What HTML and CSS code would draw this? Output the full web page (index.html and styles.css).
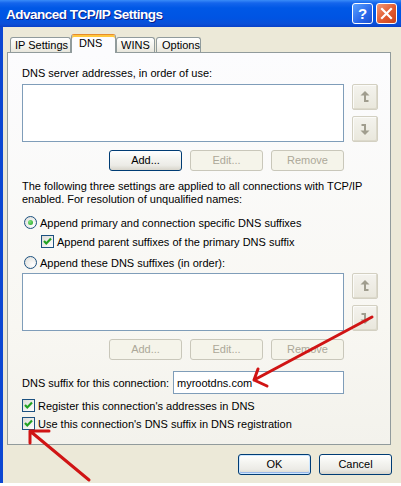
FILE: index.html
```html
<!DOCTYPE html>
<html>
<head>
<meta charset="utf-8">
<title>Advanced TCP/IP Settings</title>
<link rel="stylesheet" href="styles.css">
</head>
<body>
<div class="window">
  <div class="titlebar">
    <span class="title">Advanced TCP/IP Settings</span>
    <div class="caption-btns">
      <span class="cap-btn help">?</span>
      <span class="cap-btn close"><svg width="13" height="13" viewBox="0 0 13 13"><path d="M2 2 L11 11 M11 2 L2 11" stroke="#fff" stroke-width="2.2" stroke-linecap="square"/></svg></span>
    </div>
  </div>
  <div class="client">
    <div class="tabs">
      <span class="tab t-ip">IP Settings</span>
      <span class="tab t-dns active">DNS</span>
      <span class="tab t-wins">WINS</span>
      <span class="tab t-opt">Options</span>
    </div>
    <div class="panel">
      <div class="line">DNS server addresses, in order of use:</div>
      <div class="list-row mt4">
        <div class="listbox"></div>
        <div class="arrows">
          <span class="arrow-btn"><svg width="10" height="14" viewBox="0 0 10 14"><polygon points="0.5,5.5 5,1 9.5,5.5" fill="#a09d8e"/><rect x="4" y="5" width="2" height="6" fill="#a09d8e"/><rect x="4" y="10" width="4.5" height="2" fill="#a09d8e"/></svg></span>
          <span class="arrow-btn"><svg width="10" height="14" viewBox="0 0 10 14"><rect x="1.5" y="2" width="4.5" height="2" fill="#a09d8e"/><rect x="4" y="3" width="2" height="6" fill="#a09d8e"/><polygon points="0.5,8.5 5,13 9.5,8.5" fill="#a09d8e"/></svg></span>
        </div>
      </div>
      <div class="btn-row mt8">
        <span class="btn">Add...</span>
        <span class="btn disabled">Edit...</span>
        <span class="btn disabled">Remove</span>
      </div>
      <div class="para">The following three settings are applied to all connections with TCP/IP enabled. For resolution of unqualified names:</div>
      <div class="opt-row mt8">
        <span class="radio on"></span>
        <span>Append primary and connection specific DNS suffixes</span>
      </div>
      <div class="opt-row indent mt2">
        <span class="check on"><svg width="11" height="11" viewBox="0 0 11 11"><polyline points="2,5 4.3,7.5 9,2.6" fill="none" stroke="#21a121" stroke-width="2.2"/></svg></span>
        <span>Append parent suffixes of the primary DNS suffix</span>
      </div>
      <div class="opt-row mt4">
        <span class="radio"></span>
        <span>Append these DNS suffixes (in order):</span>
      </div>
      <div class="list-row mt2">
        <div class="listbox"></div>
        <div class="arrows">
          <span class="arrow-btn"><svg width="10" height="14" viewBox="0 0 10 14"><polygon points="0.5,5.5 5,1 9.5,5.5" fill="#a09d8e"/><rect x="4" y="5" width="2" height="6" fill="#a09d8e"/><rect x="4" y="10" width="4.5" height="2" fill="#a09d8e"/></svg></span>
          <span class="arrow-btn"><svg width="10" height="14" viewBox="0 0 10 14"><rect x="1.5" y="2" width="4.5" height="2" fill="#a09d8e"/><rect x="4" y="3" width="2" height="6" fill="#a09d8e"/><polygon points="0.5,8.5 5,13 9.5,8.5" fill="#a09d8e"/></svg></span>
        </div>
      </div>
      <div class="btn-row mt8">
        <span class="btn disabled">Add...</span>
        <span class="btn disabled">Edit...</span>
        <span class="btn disabled">Remove</span>
      </div>
      <div class="suffix-row">
        <span>DNS suffix for this connection:</span>
        <span class="textbox">myrootdns.com</span>
      </div>
      <div class="opt-row mt3">
        <span class="check on"><svg width="11" height="11" viewBox="0 0 11 11"><polyline points="2,5 4.3,7.5 9,2.6" fill="none" stroke="#21a121" stroke-width="2.2"/></svg></span>
        <span>Register this connection's addresses in DNS</span>
      </div>
      <div class="opt-row mt1">
        <span class="check on"><svg width="11" height="11" viewBox="0 0 11 11"><polyline points="2,5 4.3,7.5 9,2.6" fill="none" stroke="#21a121" stroke-width="2.2"/></svg></span>
        <span>Use this connection's DNS suffix in DNS registration</span>
      </div>
    </div>
    <div class="dlg-btns">
      <span class="btn default">OK</span>
      <span class="btn">Cancel</span>
    </div>
  </div>
</div>
<svg class="annot" width="401" height="486" viewBox="0 0 401 486">
  <g stroke="#d01414" stroke-width="3" stroke-linecap="round" fill="none">
    <path d="M372 317 L254 380 M254 380 L258 369 M254 380 L267 386"/>
    <path d="M89 480 L30 431 M30 431 L49 431 M30 431 L30 443"/>
  </g>
</svg>
</body>
</html>
```
FILE: styles.css
```css
html, body {
  margin: 0;
  padding: 0;
  background: #ffffff;
  overflow: hidden;
}
body {
  width: 401px;
  height: 486px;
  position: relative;
  font-family: "Liberation Sans", Arial, sans-serif;
  font-size: 11px;
  color: #000;
}
.window {
  width: 401px;
  height: 483px;
  display: flex;
  flex-direction: column;
  overflow: hidden;
}
.titlebar {
  height: 27px;
  flex: none;
  display: flex;
  align-items: center;
  justify-content: space-between;
  padding: 0 4px 0 6px;
  background: linear-gradient(to bottom, #3a8cf8 0px, #1565ec 3px, #0058e6 8px, #0054e3 18px, #0a4fd8 24px, #0840c8 27px);
}
.title {
  color: #fff;
  font-family: "Liberation Sans", Arial, sans-serif;
  font-weight: 700;
  font-size: 13.5px;
  padding-top: 2px;
  text-shadow: 1px 1px 0 #0a1e8a;
  letter-spacing: -0.5px;
}
.caption-btns {
  display: flex;
  gap: 3px;
}
.cap-btn {
  width: 19px;
  height: 19px;
  border: 1px solid #fff;
  border-radius: 3px;
  display: flex;
  align-items: center;
  justify-content: center;
  color: #fff;
  font-weight: bold;
  font-size: 15px;
}
.help {
  background: linear-gradient(135deg, #5aa1ff, #2a68ea 60%, #1a50d0);
}
.close {
  background: linear-gradient(135deg, #f29a79, #e15a2f 55%, #c9431c);
}
.client {
  flex: 1;
  background: #ece9d8;
  border-left: 3px solid #0c47d2;
  padding-left: 4px;
  display: flex;
  flex-direction: column;
}
.tabs {
  margin-top: 7px;
  height: 18px;
  display: flex;
  align-items: flex-end;
  padding-left: 3px;
}
.tab {
  box-sizing: border-box;
  height: 15px;
  border: 1px solid #919b9c;
  border-bottom: none;
  border-radius: 3px 3px 0 0;
  background: linear-gradient(to bottom, #ffffff, #f3f2ec 60%, #e8e6dc);
  line-height: 13px;
  padding-top: 1px;
  white-space: nowrap;
}
.t-ip { width: 61px; padding-left: 4px; }
.t-dns { width: 45px; }
.t-wins { width: 39px; padding-left: 4px; }
.t-opt { width: 45px; padding-left: 5px; margin-left: 1px; }
.tab.active {
  height: 19px;
  margin-bottom: -1px;
  position: relative;
  z-index: 1;
  background: #fcfcfe;
  border-top: 1px solid #e68b2c;
  box-shadow: inset 0 2px 0 #ffc73c;
  padding-top: 2px;
  padding-left: 7px;
}
.panel {
  box-sizing: border-box;
  width: 384px;
  border: 1px solid #919b9c;
  background: linear-gradient(to bottom, #fcfcfe 0%, #f8f7f2 70%, #f3f2ec 100%);
  padding: 14px 0 12px 14px;
}
.line { line-height: 13px; }
.mt1 { margin-top: 1px; }
.mt2 { margin-top: 2px; }
.mt3 { margin-top: 3px; }
.mt4 { margin-top: 4px; }
.mt8 { margin-top: 8px; }
.list-row {
  display: flex;
  gap: 8px;
}
.listbox {
  box-sizing: border-box;
  width: 322px;
  height: 58px;
  border: 1px solid #7f9db9;
  background: #fff;
}
.arrows {
  display: flex;
  flex-direction: column;
  justify-content: space-between;
}
.arrow-btn {
  box-sizing: border-box;
  width: 26px;
  height: 26px;
  border: 1px solid #d3d0c2;
  border-radius: 2px;
  background: linear-gradient(to bottom, #f4f3ee, #e9e7dc);
  box-shadow: inset -1px -1px 0 #dcd9cb, inset 1px 1px 0 #fbfbf8;
  display: flex;
  align-items: center;
  justify-content: center;
}
.btn-row {
  width: 322px;
  display: flex;
  justify-content: flex-end;
  gap: 8px;
}
.btn {
  box-sizing: border-box;
  width: 73px;
  height: 21px;
  border: 1px solid #003c74;
  border-radius: 3px;
  background: linear-gradient(to bottom, #ffffff 0%, #f4f4f0 40%, #ecebe6 75%, #d8d5cb 100%);
  display: flex;
  align-items: center;
  justify-content: center;
  line-height: 13px;
}
.btn.disabled {
  border-color: #c9c7ba;
  background: #f5f4ea;
  color: #aca899;
}
.btn.default {
  box-shadow: inset 0 0 0 1px #cee7ff, inset 0 -1px 0 1px #98b8ea;
}
.para {
  margin-top: 9px;
  line-height: 13px;
  width: 360px;
}
.opt-row {
  height: 17px;
  display: flex;
  align-items: center;
  gap: 3px;
  white-space: nowrap;
}
.opt-row.indent { padding-left: 19px; }
.radio {
  box-sizing: border-box;
  width: 13px;
  height: 13px;
  border-radius: 50%;
  border: 1px solid #1c5180;
  background: radial-gradient(circle at 70% 70%, #ffffff, #dcdcd7);
  margin-left: 2px;
  display: flex;
  align-items: center;
  justify-content: center;
}
.radio.on::after {
  content: "";
  width: 5px;
  height: 5px;
  border-radius: 50%;
  background: radial-gradient(circle at 35% 35%, #7ee37e, #21a121);
}
.check {
  box-sizing: border-box;
  width: 13px;
  height: 13px;
  border: 1px solid #1c5180;
  background: linear-gradient(135deg, #dcdcd7, #ffffff);
  display: flex;
  align-items: center;
  justify-content: center;
}
.suffix-row {
  width: 322px;
  margin-top: 11px;
  height: 23px;
  display: flex;
  align-items: center;
  justify-content: space-between;
}
.textbox {
  box-sizing: border-box;
  width: 171px;
  height: 23px;
  border: 1px solid #7f9db9;
  background: #fff;
  padding-left: 3px;
  display: flex;
  align-items: center;
}
.dlg-btns {
  margin-top: 9px;
  display: flex;
  justify-content: flex-end;
  gap: 8px;
  padding-right: 9px;
}
.annot {
  position: absolute;
  left: 0;
  top: 0;
  pointer-events: none;
}
```
